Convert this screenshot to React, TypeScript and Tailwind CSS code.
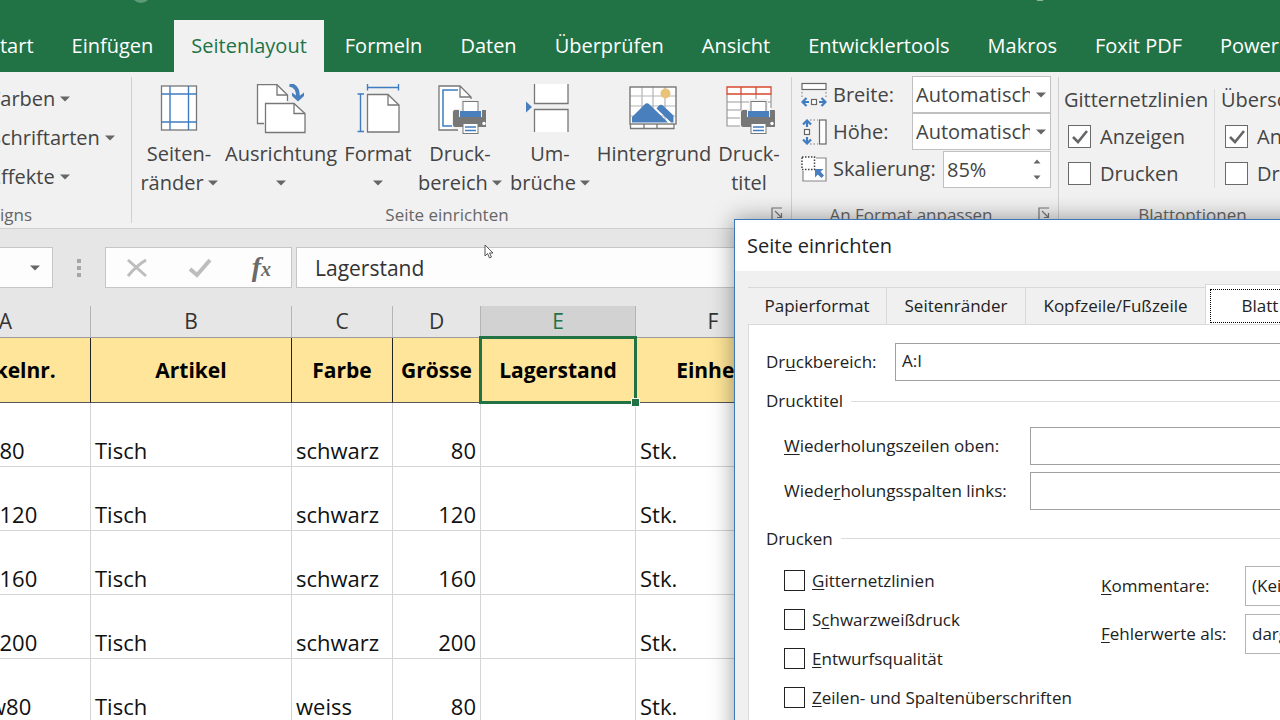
import React, { useState } from "react";

const Caret = ({ className = "" }: { className?: string }) => (
  <svg width="10" height="6" viewBox="0 0 10 6" className={`shrink-0 ${className}`}>
    <path d="M0 0.5H10L5 5.5Z" fill="#666" />
  </svg>
);

const Printer = ({ x, y }: { x: number; y: number }) => (
  <g transform={`translate(${x} ${y})`}>
    <path d="M8 -2H27V9H36V28H26V34H9V28H-1V10L1 8H8Z" fill="#f1f1f1" />
    <rect x="10" y="0.5" width="15" height="12" fill="#fff" stroke="#777" />
    <path d="M2 9H6V16H29V9H33Q35 9 35 11V24Q35 26 33 26H2Q0 26 0 24V11Q0 9 2 9Z" fill="#777" />
    <rect x="7" y="10" width="21" height="6" fill="#4a7fbd" />
    <circle cx="31" cy="22.500" r="1.700" fill="#fff" />
    <rect x="10" y="22.500" width="15" height="10" fill="#fff" stroke="#777" />
    <path d="M12 26H23M12 29.500H23" stroke="#3f7cc0" strokeWidth="1.400" />
  </g>
);

const MarginsIcon = () => (
  <svg width="52" height="52" viewBox="0 0 52 52" fill="none">
    <rect x="8.500" y="2" width="35" height="44" fill="#fff" stroke="#777" strokeWidth="1.300" />
    <path d="M17 2V46M35.500 2V46M8 10H44M8 38H44" stroke="#3f7cc0" strokeWidth="1.400" />
  </svg>
);

const OrientationIcon = () => (
  <svg width="52" height="52" viewBox="0 0 52 52" fill="none">
    <path d="M9 39.500H2.500V0.700H22L32.500 11V17" fill="#fff" />
    <path d="M9 39.500H2.500V0.700H22L32.500 11V17" stroke="#777" strokeWidth="1.300" />
    <path d="M22 0.700V11H32.500" stroke="#777" strokeWidth="1.300" />
    <path d="M10.500 19.500H39L50 29.500V48.500H10.500Z" fill="#fff" stroke="#777" strokeWidth="1.300" />
    <path d="M39 19.500V29.500H50" stroke="#777" strokeWidth="1.300" />
    <path d="M34.500 0.800Q43 1.500 43 13" stroke="#4a7fbd" strokeWidth="3.800" />
    <path d="M37 8.500L43 13L49 8.500V12L43 17.500L37 12Z" fill="#4a7fbd" />
  </svg>
);

const SizeIcon = () => (
  <svg width="52" height="52" viewBox="0 0 52 52" fill="none">
    <path d="M15.500 10.500H36L47 21V48H15.500Z" fill="#fff" stroke="#777" strokeWidth="1.300" />
    <path d="M36 10.500V21H47" stroke="#777" strokeWidth="1.300" />
    <path d="M15.500 0V6.500M46.500 0V6.500M15.500 3.500H46.500M5.500 10H12M5.500 47.500H12M8.500 10V47.500" stroke="#3f7cc0" strokeWidth="1.400" />
  </svg>
);

const PrintAreaIcon = () => (
  <svg width="52" height="52" viewBox="0 0 52 52" fill="none">
    <path d="M5 2H26L37 13V46H5Z" fill="#fff" />
    <path d="M24 46H5V2H26L37 13V16M26 2V13H37" stroke="#777" strokeWidth="1.300" />
    <path d="M24 6H9V42H18" stroke="#3f7cc0" strokeWidth="1.500" />
    <Printer x={19} y={17} />
  </svg>
);

const BreaksIcon = () => (
  <svg width="52" height="52" viewBox="0 0 52 52" fill="none">
    <path d="M10.500 0V19.500H44V0" fill="#fff" stroke="#777" strokeWidth="1.300" />
    <path d="M10.500 48V25.500H44V48" fill="#fff" stroke="#777" strokeWidth="1.300" />
    <path d="M2 17.500V28.500L8 23Z" fill="#4a7fbd" />
  </svg>
);

const BackgroundIcon = () => (
  <svg width="52" height="52" viewBox="0 0 52 52" fill="none">
    <rect x="2" y="3" width="46" height="41" fill="#fff" />
    <path d="M2 12H48M14 3V38M25 3V38M37 3V38M2 22H48M2 32H48" stroke="#b5b5b5" strokeWidth="1.200" />
    <rect x="2" y="3" width="46" height="37" stroke="#777" strokeWidth="1.400" />
    <path d="M2.500 40V44.500H46V40M16 40V44M29 40V44" stroke="#777" strokeWidth="1.300" />
    <circle cx="37.500" cy="9.500" r="5" fill="#e9c377" />
    <path d="M4 38.500V33L16.500 20.500Q19 18 21.500 20.500L40 38.500Z" fill="#4a7fbd" />
    <path d="M28.500 24.500L30.500 22Q33 19.500 35.500 22L45.500 31.500V38.500H43Z" fill="#4a7fbd" />
  </svg>
);

const PrintTitlesIcon = () => (
  <svg width="52" height="52" viewBox="0 0 52 52" fill="none">
    <rect x="4" y="3" width="44" height="39" fill="#fff" />
    <path d="M4 10V42H18M4 18H48M4 26H26M4 34H20M18 10V42M33 10V18M48 10V24" stroke="#999" strokeWidth="1.200" />
    <path d="M4 3H48V10H4ZM18 3V10M33 3V10" stroke="#d6492f" strokeWidth="1.300" />
    <Printer x={18} y={17} />
  </svg>
);

const WidthIcon = () => (
  <svg width="26" height="26" viewBox="0 0 26 26" fill="none">
    <rect x="1" y="1.500" width="24" height="6" fill="#fff" stroke="#666" strokeWidth="1.200" />
    <path d="M1 10V17M25 10V17" stroke="#777" strokeDasharray="1.500 2" />
    <rect x="10.500" y="17.500" width="5" height="5" fill="#fff" stroke="#666" strokeWidth="1.200" />
    <path d="M2 20H8M18 20H24M5.500 16L1.500 20L5.500 24M20.500 16L24.500 20L20.500 24" stroke="#3f7cc0" strokeWidth="2.200" />
  </svg>
);

const HeightIcon = () => (
  <svg width="26" height="26" viewBox="0 0 26 26" fill="none">
    <rect x="18.500" y="1" width="6.500" height="24" fill="#fff" stroke="#666" strokeWidth="1.200" />
    <path d="M9 1H17M9 25H17" stroke="#777" strokeDasharray="1.500 2" />
    <rect x="3.500" y="10.500" width="5" height="5" fill="#fff" stroke="#666" strokeWidth="1.200" />
    <path d="M6 2V8M6 18V24M2 5.500L6 1.500L10 5.500M2 20.500L6 24.500L10 20.500" stroke="#3f7cc0" strokeWidth="2.200" />
  </svg>
);

const ScaleIcon = () => (
  <svg width="26" height="26" viewBox="0 0 26 26" fill="none">
    <path d="M2 16V25H25V2H15" fill="#fff" />
    <path d="M2 15V25H25V2H15" stroke="#888" strokeWidth="1.200" />
    <rect x="1" y="1" width="12.500" height="12.500" fill="#fff" stroke="#444" strokeWidth="1.500" strokeDasharray="1.500 1.500" />
    <path d="M14 21.500V13H22.500L19.500 15.500L23 19.500L20.500 22L16.800 18.500Z" fill="#4a7fbd" />
  </svg>
);

const LauncherIcon = () => (
  <svg width="12" height="12" viewBox="0 0 12 12" fill="none" stroke="#777" strokeWidth="1.200">
    <path d="M1 12V1H11M4 4L10 10M10.500 6V10.500H6" />
  </svg>
);

const menuTabs = [
  "Start",
  "Einfügen",
  "Seitenlayout",
  "Formeln",
  "Daten",
  "Überprüfen",
  "Ansicht",
  "Entwicklertools",
  "Makros",
  "Foxit PDF",
  "Power",
];

const ribbonButtons = [
  { icon: <MarginsIcon />, top: "Seiten-", bottom: "ränder", caret: true, width: "w-[84px]" },
  { icon: <OrientationIcon />, top: "Ausrichtung", bottom: "", caret: true, width: "w-[120px]" },
  { icon: <SizeIcon />, top: "Format", bottom: "", caret: true, width: "w-[74px]" },
  { icon: <PrintAreaIcon />, top: "Druck-", bottom: "bereich", caret: true, width: "w-[90px]" },
  { icon: <BreaksIcon />, top: "Um-", bottom: "brüche", caret: true, width: "w-[90px]" },
  { icon: <BackgroundIcon />, top: "Hintergrund", bottom: "", caret: false, width: "w-[118px]" },
  { icon: <PrintTitlesIcon />, top: "Druck-", bottom: "titel", caret: false, width: "w-[72px]" },
];

const columns = [
  { letter: "A", title: "Artikelnr.", width: "w-[170px]" },
  { letter: "B", title: "Artikel", width: "w-[201px]" },
  { letter: "C", title: "Farbe", width: "w-[101px]" },
  { letter: "D", title: "Grösse", width: "w-[88px]" },
  { letter: "E", title: "Lagerstand", width: "w-[155px]" },
  { letter: "F", title: "Einheit", width: "w-[155px]" },
];

const rows = [
  { nr: "s80", artikel: "Tisch", farbe: "schwarz", groesse: 80 },
  { nr: "s120", artikel: "Tisch", farbe: "schwarz", groesse: 120 },
  { nr: "s160", artikel: "Tisch", farbe: "schwarz", groesse: 160 },
  { nr: "s200", artikel: "Tisch", farbe: "schwarz", groesse: 200 },
  { nr: "w80", artikel: "Tisch", farbe: "weiss", groesse: 80 },
];

const RibbonCheck = ({ label, initial }: { label: string; initial: boolean }) => {
  const [checked, setChecked] = useState(initial);
  return (
    <label className="flex h-[37px] items-center gap-[9px] pl-1">
      <span className="relative flex">
        <input
          type="checkbox"
          checked={checked}
          onChange={() => setChecked(!checked)}
          className="size-[23px] appearance-none border border-[#6a6a6a] bg-white"
        />
        {checked && (
          <svg width="23" height="23" viewBox="0 0 23 23" fill="none" className="pointer-events-none absolute inset-0">
            <path d="M5 12L10 17L19 6" stroke="#666" strokeWidth="2.600" />
          </svg>
        )}
      </span>
      {label}
    </label>
  );
};

const FitSelect = ({ id }: { id: string }) => (
  <div className="relative ml-auto w-[139px]">
    <select
      id={id}
      className="h-[37px] w-full appearance-none overflow-hidden border border-[#c0c0c0] bg-white pr-5 pl-[3px]"
    >
      <option>Automatisch</option>
    </select>
    <Caret className="pointer-events-none absolute top-4 right-[5px]" />
  </div>
);

const Ribbon = () => (
  <div className="flex h-[157px] shrink-0 border-b border-[#cfcfcf] bg-[#f1f1f1] text-[20px] whitespace-nowrap text-[#444]">
    <section className="flex w-[131px] shrink-0 flex-col pt-[7px]">
      {["Farben", "Schriftarten", "Effekte"].map((name) => (
        <button key={name} className="-ml-[10px] flex h-[39px] items-center gap-[5px]">
          {name}
          <Caret />
        </button>
      ))}
      <h2 className="mt-auto -ml-[30px] h-[25px] text-[17px] leading-6 text-[#666]">Designs</h2>
    </section>

    <div className="my-[5px] w-px shrink-0 bg-[#d0d0d0]" />

    <section className="flex w-[659px] shrink-0 flex-col pt-3 pl-[5px]">
      <div className="flex">
        {ribbonButtons.map((item) => (
          <button
            key={item.top + item.bottom}
            className={`flex shrink-0 flex-col items-center leading-[29px] ${item.width}`}
          >
            {item.icon}
            <span className="mt-[3px]">{item.top}</span>
            <span className="flex h-[29px] items-center gap-1">
              {item.bottom}
              {item.caret && <Caret />}
            </span>
          </button>
        ))}
      </div>
      <div className="mt-auto flex h-[25px] items-start">
        <h2 className="flex-1 pr-[14px] text-center text-[17px] leading-6 text-[#666]">Seite einrichten</h2>
        <button aria-label="Seite einrichten öffnen" className="mt-1 mr-2">
          <LauncherIcon />
        </button>
      </div>
    </section>

    <div className="my-[5px] w-px shrink-0 bg-[#d0d0d0]" />

    <section className="flex w-[266px] shrink-0 flex-col pt-1">
      <div className="flex h-[37px] items-center pr-[7px] pl-[9px]">
        <WidthIcon />
        <label htmlFor="breite" className="pl-[6px]">Breite:</label>
        <FitSelect id="breite" />
      </div>
      <div className="flex h-[37px] items-center pr-[7px] pl-[9px]">
        <HeightIcon />
        <label htmlFor="hoehe" className="pl-[6px]">Höhe:</label>
        <FitSelect id="hoehe" />
      </div>
      <div className="flex h-[38px] items-center pr-[7px] pl-[9px]">
        <ScaleIcon />
        <label htmlFor="skalierung" className="pl-[6px]">Skalierung:</label>
        <div className="relative ml-auto w-[108px]">
          <input id="skalierung" defaultValue="85%" className="h-[37px] w-full border border-[#c0c0c0] bg-white pl-[3px]" />
          <div className="absolute top-1 right-2 flex flex-col">
            <button aria-label="Mehr" className="flex h-[14px] w-3 items-center justify-center">
              <svg width="8" height="5" viewBox="0 0 8 5"><path d="M0.500 4.500H7.500L4 0.500Z" fill="#666" /></svg>
            </button>
            <button aria-label="Weniger" className="flex h-[18px] w-3 items-center justify-center">
              <svg width="8" height="5" viewBox="0 0 8 5"><path d="M0.500 0.500H7.500L4 4.500Z" fill="#666" /></svg>
            </button>
          </div>
        </div>
      </div>
      <div className="mt-auto flex h-[25px] items-start">
        <h2 className="flex-1 pr-2 text-center text-[17px] leading-6 text-[#666]">An Format anpassen</h2>
        <button aria-label="An Format anpassen öffnen" className="mt-1 mr-2">
          <LauncherIcon />
        </button>
      </div>
    </section>

    <div className="my-[5px] w-px shrink-0 bg-[#d0d0d0]" />

    <section className="flex w-[267px] shrink-0 flex-col pt-[9px]">
      <div className="flex">
        <div className="w-[155px] shrink-0 pl-[5px]">
          <h3 className="h-[37px] leading-[37px]">Gitternetzlinien</h3>
          <RibbonCheck label="Anzeigen" initial={true} />
          <RibbonCheck label="Drucken" initial={false} />
        </div>
        <div className="mt-2 mb-1 w-px shrink-0 bg-[#dcdcdc]" />
        <div className="pl-[6px]">
          <h3 className="h-[37px] leading-[37px]">Überschriften</h3>
          <RibbonCheck label="Anzeigen" initial={true} />
          <RibbonCheck label="Drucken" initial={false} />
        </div>
      </div>
      <h2 className="mt-auto h-[25px] text-center text-[17px] leading-6 text-[#666]">Blattoptionen</h2>
    </section>
  </div>
);

const FormulaBar = () => (
  <div className="flex h-[77px] shrink-0 items-start bg-[#e6e6e6] pt-[18px]">
    <div className="flex h-[41px] w-[53px] items-center justify-end border border-l-0 border-[#c6c6c6] bg-[#fdfdfd] pr-3">
      <button aria-label="Namenfeld"><Caret /></button>
    </div>
    <svg width="52" height="41" viewBox="0 0 52 41" fill="#a6a6a6">
      <rect x="24" y="12" width="4" height="4" />
      <rect x="24" y="19" width="4" height="4" />
      <rect x="24" y="26" width="4" height="4" />
    </svg>
    <div className="flex h-[41px] w-[187px] items-center justify-around border border-[#c6c6c6] bg-[#fdfdfd]">
      <button aria-label="Abbrechen">
        <svg width="22" height="20" viewBox="0 0 22 20" fill="none" stroke="#bdbdbd" strokeWidth="3">
          <path d="M2 2L20 18M20 2Q10 8 2 18" />
        </svg>
      </button>
      <button aria-label="Eingeben">
        <svg width="24" height="20" viewBox="0 0 24 20" fill="none" stroke="#bdbdbd" strokeWidth="4">
          <path d="M2 11L9 17L22 2" />
        </svg>
      </button>
      <button className="font-['Liberation_Serif',serif] text-[28px] leading-8 font-bold text-[#6a6a6a] italic">
        f<span className="text-[20px]">x</span>
      </button>
    </div>
    <input
      aria-label="Bearbeitungsleiste"
      defaultValue="Lagerstand"
      className="ml-1 h-[41px] min-w-0 flex-1 border border-[#c6c6c6] bg-[#fdfdfd] pl-[18px] text-[21px] text-[#333]"
    />
  </div>
);

const Sheet = () => (
  <table className="-ml-[79px] w-[870px] table-fixed border-separate border-spacing-0 bg-white text-[22px] leading-7 text-[#111]">
    <thead>
      <tr className="h-8 text-[21px]">
        {columns.map((col) => (
          <th
            key={col.letter}
            className={`border-r border-b border-r-[#b4b4b4] border-b-[#9b9b9b] p-0 pb-[2px] font-normal ${col.width} ${
              col.letter === "E" ? "bg-[#d2d2d2] text-[#217346]" : "bg-[#e6e6e6] text-[#333]"
            }`}
          >
            {col.letter}
          </th>
        ))}
      </tr>
    </thead>
    <tbody>
      <tr className="h-[65px] text-[21px]">
        {columns.map((col) => (
          <td
            key={col.letter}
            className="relative border-r border-b border-r-[#222] border-b-[#555] bg-[#fee599] p-0 text-center font-bold text-black"
          >
            {col.title}
            {col.letter === "E" && (
              <span className="absolute -inset-[2px] z-10 border-[3px] border-[#217346]">
                <span className="absolute -right-[6px] -bottom-[6px] size-[9px] border border-white bg-[#217346]" />
              </span>
            )}
          </td>
        ))}
      </tr>
      {rows.map((row) => (
        <tr key={row.nr} className="h-16 align-bottom">
          <td className="border-r border-b border-[#d4d4d4] p-0 pb-[2px] pl-[68px]">{row.nr}</td>
          <td className="border-r border-b border-[#d4d4d4] p-0 pb-[2px] pl-1">{row.artikel}</td>
          <td className="border-r border-b border-[#d4d4d4] p-0 pb-[2px] pl-1">{row.farbe}</td>
          <td className="border-r border-b border-[#d4d4d4] p-0 pr-1 pb-[2px] text-right">{row.groesse}</td>
          <td className="border-r border-b border-[#d4d4d4] p-0" />
          <td className="border-r border-b border-[#d4d4d4] p-0 pb-[2px] pl-1">Stk.</td>
        </tr>
      ))}
    </tbody>
  </table>
);

const PrintOption = ({ hotkey, rest, before = "" }: { hotkey: string; rest: string; before?: string }) => (
  <label className="flex h-[39px] items-center gap-[7px]">
    <input type="checkbox" className="size-[21px] appearance-none border border-[#222] bg-white" />
    <span>
      {before}
      <u className="underline-offset-2">{hotkey}</u>
      {rest}
    </span>
  </label>
);

const PageSetupDialog = () => (
  <div
    role="dialog"
    aria-label="Seite einrichten"
    className="absolute top-[219px] left-[734px] z-20 w-[760px] border border-[#3a78b8] bg-[#f0f0f0] text-[17px] whitespace-nowrap text-[#222] shadow-[0_0_22px_rgba(0,0,0,0.4)]"
  >
    <h1 className="h-[51px] bg-white pl-3 text-[20px] leading-[51px]">Seite einrichten</h1>
    <div className="px-[13px] pt-[13px] pb-4">
      <div className="flex items-end">
        <button className="h-[37px] w-[139px] border-t border-r border-[#d9d9d9]">Papierformat</button>
        <button className="h-[37px] w-[139px] border-t border-r border-[#d9d9d9]">Seitenränder</button>
        <button className="h-[37px] w-[179px] border-t border-[#d9d9d9]">Kopfzeile/Fußzeile</button>
        <button className="h-10 w-[110px] border border-b-0 border-[#d9d9d9] bg-white p-1">
          <span className="block border border-dotted border-black leading-8">Blatt</span>
        </button>
      </div>
      <div className="h-[520px] border border-[#d9d9d9] bg-white pt-[18px] pr-4 pl-[17px]">
        <div className="flex items-center">
          <label htmlFor="druckbereich" className="w-[129px]">
            Dr<u className="underline-offset-2">u</u>ckbereich:
          </label>
          <input id="druckbereich" defaultValue="A:I" className="h-[38px] flex-1 border border-[#a0a0a0] pb-1 pl-[6px]" />
        </div>
        <div className="mb-[6px] flex h-10 items-center gap-2">
          <h2>Drucktitel</h2>
          <div className="h-px flex-1 bg-[#dcdcdc]" />
        </div>
        <div className="flex flex-col gap-[7px] pl-[18px]">
          <div className="flex items-center">
            <label htmlFor="zeilen" className="w-[246px]">
              <u className="underline-offset-2">W</u>iederholungszeilen oben:
            </label>
            <input id="zeilen" className="h-[38px] flex-1 border border-[#a0a0a0] pl-[6px]" />
          </div>
          <div className="flex items-center">
            <label htmlFor="spalten" className="w-[246px]">
              Wiede<u className="underline-offset-2">r</u>holungsspalten links:
            </label>
            <input id="spalten" className="h-[38px] flex-1 border border-[#a0a0a0] pl-[6px]" />
          </div>
        </div>
        <div className="mt-[6px] flex h-[45px] items-center gap-2">
          <h2>Drucken</h2>
          <div className="h-px flex-1 bg-[#dcdcdc]" />
        </div>
        <div className="flex pl-[18px]">
          <div className="w-[317px]">
            <PrintOption hotkey="G" rest="itternetzlinien" />
            <PrintOption before="S" hotkey="c" rest="hwarzweißdruck" />
            <PrintOption hotkey="E" rest="ntwurfsqualität" />
            <PrintOption hotkey="Z" rest="eilen- und Spaltenüberschriften" />
          </div>
          <div className="flex flex-1 flex-col gap-2 pt-[5px]">
            <div className="flex items-center">
              <label htmlFor="kommentare" className="w-36">
                <u className="underline-offset-2">K</u>ommentare:
              </label>
              <select id="kommentare" className="h-10 flex-1 appearance-none border border-[#b4b4b4] bg-white pl-[6px]">
                <option>(Keine)</option>
              </select>
            </div>
            <div className="flex items-center">
              <label htmlFor="fehlerwerte" className="w-36">
                <u className="underline-offset-2">F</u>ehlerwerte als:
              </label>
              <select id="fehlerwerte" className="h-10 flex-1 appearance-none border border-[#b4b4b4] bg-white pl-[6px]">
                <option>dargestellt</option>
              </select>
            </div>
          </div>
        </div>
      </div>
    </div>
  </div>
);

export default function App() {
  const [activeTab, setActiveTab] = useState("Seitenlayout");

  return (
    <div className="relative flex h-screen flex-col overflow-hidden bg-white font-['Open_Sans',sans-serif]">
      <header className="shrink-0 bg-[#217346]">
        <div className="flex h-5 overflow-hidden pr-[236px] pl-[131px]">
          <div className="-mt-[17px] size-5 rounded-full bg-[#5c9a78]" />
          <div className="-mt-1 ml-auto h-[5px] w-2 rounded-full bg-[#8fbaa2]" />
        </div>
        <nav className="-ml-7 flex h-[52px] gap-1 text-[20px] whitespace-nowrap text-white">
          {menuTabs.map((tab) => (
            <button
              key={tab}
              onClick={() => setActiveTab(tab)}
              className={`shrink-0 px-[17px] ${activeTab === tab ? "bg-[#f1f1f1] text-[#217346]" : ""}`}
            >
              {tab}
            </button>
          ))}
        </nav>
      </header>

      <Ribbon />
      <FormulaBar />
      <Sheet />
      <PageSetupDialog />

      <svg width="10" height="15" viewBox="0 0 10 15" className="pointer-events-none absolute top-[244px] left-[484px]">
        <path d="M1 1V12L3.500 9.500L5.500 14L7.500 13L5.500 9H9Z" fill="#fff" stroke="#555" />
      </svg>
    </div>
  );
}
